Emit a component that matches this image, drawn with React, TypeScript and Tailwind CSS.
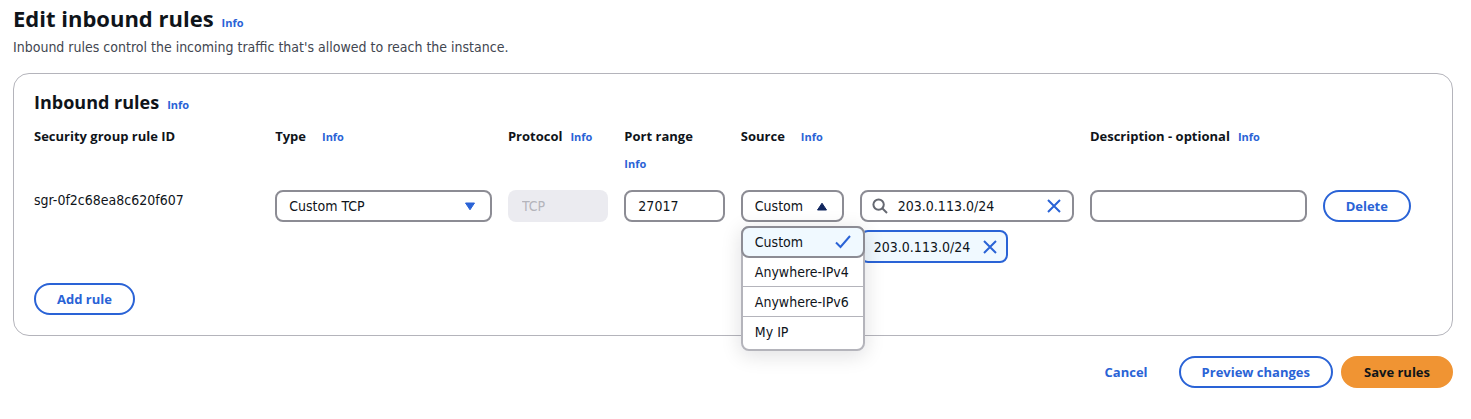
import { useState } from "react";
import type { ReactNode } from "react";

const field =
  "h-8 w-full min-w-0 rounded-lg border-2 border-[#8c8c94] bg-white px-3 text-sm text-[#0f141a] outline-none";
const pill =
  "h-8 rounded-full border-2 px-[21px] font-['Open_Sans','Noto_Sans',sans-serif] text-[13px] leading-5 font-bold whitespace-nowrap";
const outlined = "border-[#2a63d6] bg-white text-[#2a63d6]";

function Info() {
  return (
    <a
      href="#info"
      className="font-['Open_Sans','Noto_Sans',sans-serif] text-[11px] leading-7 font-bold text-[#2a63d6]"
    >
      Info
    </a>
  );
}

function Triangle({ up = false }: { up?: boolean }) {
  return (
    <svg
      viewBox="0 0 12 9"
      aria-hidden="true"
      className={
        up
          ? "pointer-events-none mr-4 h-[9px] w-3 self-center justify-self-end text-[#10265e] [grid-area:1/1]"
          : "pointer-events-none mr-4 h-[9px] w-3 self-center justify-self-end text-[#2a63d6] [grid-area:1/1]"
      }
    >
      <path
        d={up ? "M1.5 8h9L6 1.2Z" : "M1.5 1h9L6 7.8Z"}
        fill="currentColor"
        stroke="currentColor"
        strokeLinejoin="round"
      />
    </svg>
  );
}

function Cross() {
  return (
    <svg viewBox="0 0 16 16" className="size-4" fill="none" aria-hidden="true">
      <path d="M2 2l12 12M14 2L2 14" stroke="#2a63d6" strokeWidth="2" />
    </svg>
  );
}

function Search() {
  return (
    <svg viewBox="0 0 16 16" className="size-4 shrink-0" fill="none" aria-hidden="true">
      <circle cx="6.6" cy="6.6" r="5.2" stroke="#656871" strokeWidth="2" />
      <path d="M10.5 10.5L15 15" stroke="#656871" strokeWidth="2" />
    </svg>
  );
}

function Head({ children, wide = false, info = true }: { children: ReactNode; wide?: boolean; info?: boolean }) {
  return (
    <th
      scope="col"
      className="p-0 pr-4 text-left align-top font-['Open_Sans','Noto_Sans',sans-serif] text-[13px] leading-7 font-bold"
    >
      <div className={wide ? "flex flex-wrap items-baseline gap-x-4" : "flex flex-wrap items-baseline gap-x-2"}>
        <span className="whitespace-nowrap">{children}</span>
        {info && <Info />}
      </div>
    </th>
  );
}

const sources = ["Custom", "Anywhere-IPv4", "Anywhere-IPv6", "My IP"];

export default function App() {
  const [source, setSource] = useState("Custom");
  const [query, setQuery] = useState("203.0.113.0/24");
  const [port, setPort] = useState("27017");

  return (
    <main className="bg-white pt-[3px] pr-[18px] pb-8 pl-[13px] font-['DejaVu_Sans_Condensed','Noto_Sans',sans-serif] text-sm text-[#0f141a]">
      <header>
        <div className="flex items-baseline gap-2">
          <h1 className="font-['Open_Sans','Noto_Sans',sans-serif] text-[22px] leading-[30px] font-bold">
            Edit inbound rules
          </h1>
          <Info />
        </div>
        <p className="leading-5 text-[#424650]">
          Inbound rules control the incoming traffic that's allowed to reach the instance.
        </p>
      </header>

      <section className="mt-4 rounded-2xl border border-[#b4b4bb] px-5 pt-4 pb-5">
        <div className="flex items-baseline gap-2">
          <h2 className="font-['Open_Sans','Noto_Sans',sans-serif] text-lg leading-6 font-bold">
            Inbound rules
          </h2>
          <Info />
        </div>

        <table className="mt-[3px] w-full table-fixed border-collapse">
          <colgroup>
            <col className="w-[17.25%]" />
            <col className="w-[16.65%]" />
            <col className="w-[8.33%]" />
            <col className="w-[8.33%]" />
            <col className="w-[24.97%]" />
            <col className="w-[16.65%]" />
            <col />
          </colgroup>
          <thead>
            <tr>
              <Head info={false}>Security group rule ID</Head>
              <Head wide>Type</Head>
              <Head>Protocol</Head>
              <Head wide>Port range</Head>
              <Head wide>Source</Head>
              <Head>Description - optional</Head>
              <td />
            </tr>
          </thead>
          <tbody>
            <tr className="align-top">
              <td className="pt-3 pr-4 leading-5">sgr-0f2c68ea8c620f607</td>
              <td className="pt-3 pr-4">
                <div className="grid">
                  <select aria-label="Type" className={`${field} appearance-none [grid-area:1/1]`}>
                    <option>Custom TCP</option>
                    <option>All traffic</option>
                  </select>
                  <Triangle />
                </div>
              </td>
              <td className="pt-3 pr-4">
                <input
                  aria-label="Protocol"
                  disabled
                  value="TCP"
                  className="h-8 w-full rounded-lg bg-[#ebebf0] px-[14px] text-sm text-[#b4b4bb]"
                />
              </td>
              <td className="pt-3 pr-4">
                <input
                  aria-label="Port range"
                  value={port}
                  onChange={(e) => setPort(e.target.value)}
                  className={field}
                />
              </td>
              <td className="pt-3 pr-4">
                <div className="grid grid-cols-[minmax(0,103fr)_minmax(0,214fr)] gap-x-4 gap-y-2">
                  <div className="relative grid">
                    <select
                      aria-label="Source"
                      value={source}
                      onChange={(e) => setSource(e.target.value)}
                      className={`${field} appearance-none [grid-area:1/1]`}
                    >
                      {sources.map((s) => (
                        <option key={s}>{s}</option>
                      ))}
                    </select>
                    <Triangle up />
                    <ul
                      role="listbox"
                      aria-label="Source options"
                      className="absolute top-full left-0 z-10 mt-1 w-max min-w-[124px] rounded-lg border-2 border-[#b4b4bb] bg-white pb-0.5 leading-5 shadow-[0_4px_20px_1px_rgba(0,7,22,0.12)]"
                    >
                      {sources.map((s) => (
                        <li
                          key={s}
                          role="option"
                          aria-selected={s === source}
                          onClick={() => setSource(s)}
                          className={
                            s === source
                              ? "-mx-0.5 -mt-0.5 -mb-px flex h-8 items-center justify-between rounded-lg border-2 border-[#8c8c94] bg-[#f0f9ff] px-3"
                              : "flex h-[30px] items-center border-b border-[#b4b4bb] px-3 last:border-b-0"
                          }
                        >
                          {s}
                          {s === source && (
                            <svg viewBox="0 0 16 16" className="size-4" fill="none" aria-hidden="true">
                              <path d="M1 8.5l4.5 4.5L15 2" stroke="#2a63d6" strokeWidth="2" />
                            </svg>
                          )}
                        </li>
                      ))}
                    </ul>
                  </div>
                  <div className="flex h-8 items-center rounded-lg border-2 border-[#8c8c94] bg-white px-2.5">
                    <Search />
                    <input
                      aria-label="Source address"
                      value={query}
                      onChange={(e) => setQuery(e.target.value)}
                      className="w-full min-w-0 bg-transparent pl-2.5 text-sm outline-none"
                    />
                    <button type="button" aria-label="Clear" onClick={() => setQuery("")}>
                      <Cross />
                    </button>
                  </div>
                  <div className="col-start-2 flex h-[33px] w-max items-center gap-3 rounded-lg border-2 border-[#2a63d6] bg-[#f0f9ff] pr-2 pl-3 leading-5">
                    203.0.113.0/24
                    <button type="button" aria-label="Remove 203.0.113.0/24">
                      <Cross />
                    </button>
                  </div>
                </div>
              </td>
              <td className="pt-3 pr-4">
                <input aria-label="Description" className={field} />
              </td>
              <td className="pt-3">
                <button type="button" className={`${pill} ${outlined}`}>
                  Delete
                </button>
              </td>
            </tr>
          </tbody>
        </table>

        <button type="button" className={`mt-5 block ${pill} ${outlined}`}>
          Add rule
        </button>
      </section>

      <footer className="mt-5 flex justify-end gap-2">
        <button type="button" className={`${pill} border-transparent text-[#2a63d6]`}>
          Cancel
        </button>
        <button type="button" className={`${pill} ${outlined}`}>
          Preview changes
        </button>
        <button type="button" className={`${pill} border-[#f09433] bg-[#f09433] text-[#0f141a]`}>
          Save rules
        </button>
      </footer>
    </main>
  );
}
